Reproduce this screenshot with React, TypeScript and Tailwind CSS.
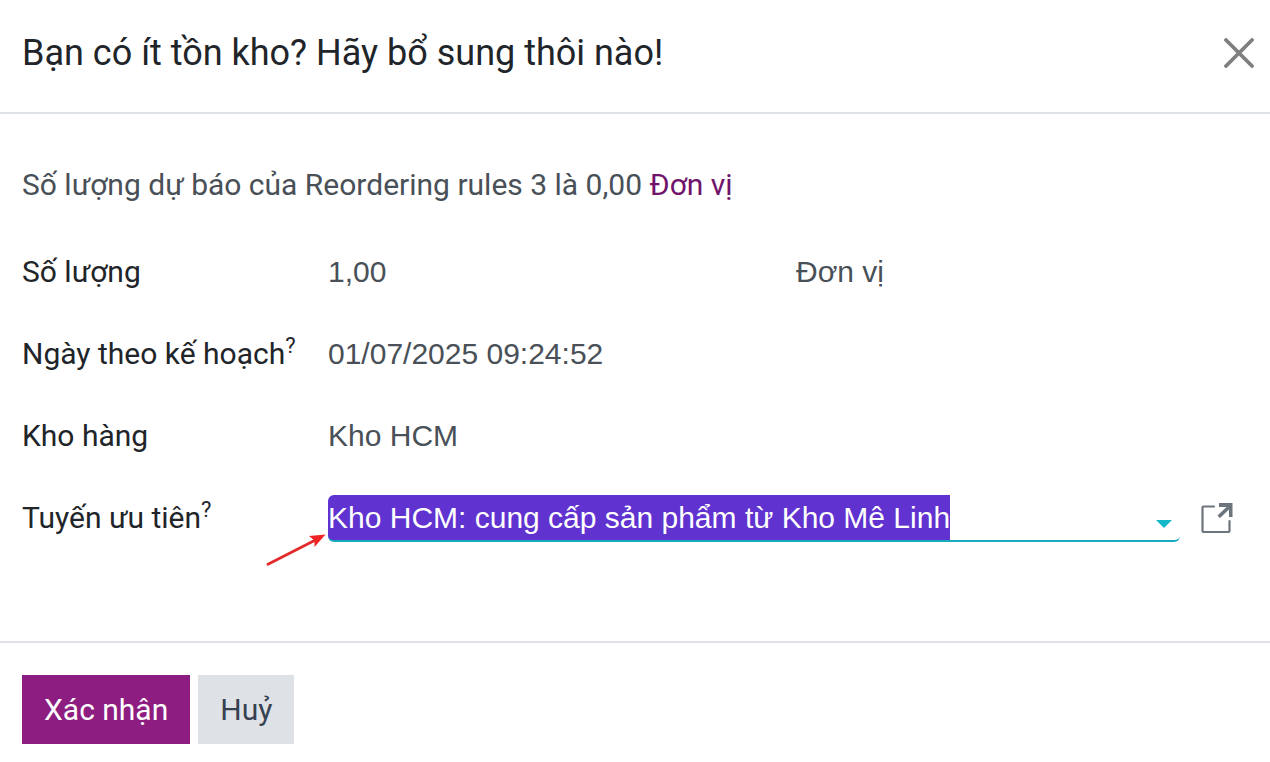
import { useEffect, useId, useRef } from "react";
import type { ReactNode } from "react";

const INPUT =
  "block h-[47px] w-full min-w-0 border-b-2 border-transparent bg-transparent p-0 font-['Liberation_Sans',Arial,sans-serif] text-[30px] leading-[45px] text-[#495057] outline-none";

export default function App() {
  const routeRef = useRef<HTMLInputElement>(null);

  // the dialog opens with the route already selected for editing
  useEffect(() => {
    routeRef.current?.focus();
    routeRef.current?.select();
  }, []);

  return (
    <div role="dialog" aria-labelledby="dialog-title" className="w-full bg-white font-[Roboto,'Noto_Sans',sans-serif] text-[30px] leading-[45px] text-[#212529]">
      {/* Header */}
      <header className="flex items-center justify-between border-b-2 border-[#dee2e6] pt-[25px] pr-4 pb-[31px] pl-[22px]">
        <h1 id="dialog-title" className="text-[36px] leading-[56px]">Bạn có ít tồn kho? Hãy bổ sung thôi nào!</h1>
        <button type="button" aria-label="Đóng" className="text-[#7f7f7f]">
          <CloseIcon />
        </button>
      </header>

      {/* Form */}
      <main className="px-[22px] pt-12 pb-[99px]">
        <p className="mb-[42px] text-[#495057]">
          Số lượng dự báo của Reordering rules 3 là 0,00 <span className="text-[#71136b]">Đơn vị</span>
        </p>
        <div className="flex flex-col gap-[35px]">
          <Field label="Số lượng">
            {(id) => (
              <div className="grid grid-cols-2 gap-4">
                <input id={id} className={INPUT} defaultValue="1,00" />
                <input aria-label="Đơn vị" className={INPUT} defaultValue="Đơn vị" />
              </div>
            )}
          </Field>
          <Field label="Ngày theo kế hoạch" help>
            {(id) => <input id={id} className={INPUT} defaultValue="01/07/2025 09:24:52" />}
          </Field>
          <Field label="Kho hàng">
            {(id) => <input id={id} className={INPUT} defaultValue="Kho HCM" />}
          </Field>
          <Field label="Tuyến ưu tiên" help>
            {(id) => (
              <div className="flex items-center gap-[21px] pr-[15px]">
                <div className="relative flex-1">
                  {/* the highlight fills the whole line, not only the glyph box */}
                  <input
                    id={id}
                    ref={routeRef}
                    role="combobox"
                    aria-expanded={false}
                    className="block h-[47px] w-full min-w-0 rounded-md border-b-2 border-[#17a9bd] bg-[linear-gradient(#6032d0,#6032d0)] bg-[length:622px_45px] bg-no-repeat p-0 font-['Liberation_Sans',Arial,sans-serif] text-[30px] leading-[45px] text-white outline-none selection:bg-[#6032d0] selection:text-white"
                    defaultValue="Kho HCM: cung cấp sản phẩm từ Kho Mê Linh"
                  />
                  <svg className="pointer-events-none absolute top-[25px] right-2" width="16" height="8" viewBox="0 0 16 8" fill="#12b8c8">
                    <path d="M0 0h16L8 8z" />
                  </svg>
                  <PointerArrow />
                </div>
                <button type="button" aria-label="Liên kết nội bộ" className="text-[#6c757d]">
                  <ExternalIcon />
                </button>
              </div>
            )}
          </Field>
        </div>
      </main>

      {/* Footer */}
      <footer className="flex gap-2 border-t-2 border-[#dee2e6] px-[22px] pt-8 pb-[18px]">
        <button type="button" className="h-[69px] bg-[#8d1d80] px-[22px] text-white">Xác nhận</button>
        <button type="button" className="h-[69px] bg-[#dee2e6] px-[22px] text-[#374151]">Huỷ</button>
      </footer>
    </div>
  );
}

function Field({ label, help, children }: { label: string; help?: boolean; children: (id: string) => ReactNode }) {
  const id = useId();
  return (
    <div className="grid grid-cols-[306px_1fr] items-start">
      <label htmlFor={id} className="flex items-start whitespace-nowrap">
        {label}
        {help && <span className="text-[22px] leading-[30px]">?</span>}
      </label>
      {children(id)}
    </div>
  );
}

function CloseIcon() {
  return (
    <svg className="block" width="30" height="30" viewBox="0 0 30 30" fill="none" stroke="currentColor" strokeWidth="3.8" strokeLinecap="round">
      <path d="M2 2l26 26M28 2L2 28" />
    </svg>
  );
}

function ExternalIcon() {
  return (
    <svg className="block" width="32" height="32" viewBox="0 0 32 32">
      <path d="M13 3.500H2.500Q1.500 3.500 1.500 4.500V28Q1.500 29 2.500 29H27.500Q28.500 29 28.500 28V18" fill="none" stroke="currentColor" strokeWidth="2.200" strokeLinecap="round" />
      <path d="M18 0H31.500V14H28V6.500L19 15L16.500 12.500L25.500 4H18Z" fill="currentColor" />
    </svg>
  );
}

function PointerArrow() {
  return (
    <svg className="pointer-events-none absolute top-[39px] -left-[62px]" width="60" height="32" viewBox="0 0 60 32" aria-hidden="true">
      <path d="M2 30.300L50 5.800" stroke="#e12b2b" strokeWidth="2.800" strokeLinecap="round" fill="none" />
      <path d="M59.500 0.500L43 2L48.500 6.500L48.500 13Z" fill="#f02424" />
    </svg>
  );
}
